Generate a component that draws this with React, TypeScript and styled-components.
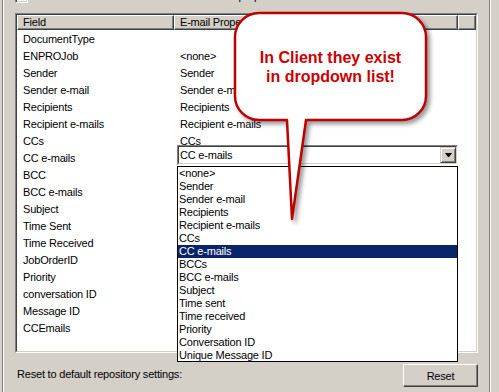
import React from 'react';
import styled, { createGlobalStyle } from 'styled-components';

const FIELDS: [string, string | null][] = [
  ['DocumentType', ''],
  ['ENPROJob', '<none>'],
  ['Sender', 'Sender'],
  ['Sender e-mail', 'Sender e-mail'],
  ['Recipients', 'Recipients'],
  ['Recipient e-mails', 'Recipient e-mails'],
  ['CCs', 'CCs'],
  ['CC e-mails', null],
  ['BCC', ''],
  ['BCC e-mails', ''],
  ['Subject', ''],
  ['Time Sent', ''],
  ['Time Received', ''],
  ['JobOrderID', ''],
  ['Priority', ''],
  ['conversation ID', ''],
  ['Message ID', ''],
  ['CCEmails', '']
];

const OPTIONS = [
  '<none>',
  'Sender',
  'Sender e-mail',
  'Recipients',
  'Recipient e-mails',
  'CCs',
  'CC e-mails',
  'BCCs',
  'BCC e-mails',
  'Subject',
  'Time sent',
  'Time received',
  'Priority',
  'Conversation ID',
  'Unique Message ID'
];

const SELECTED = 'CC e-mails';

const GlobalStyle = createGlobalStyle`
  html, body {
    margin: 0;
    padding: 0;
    background: #d4d0c8;
    overflow: hidden;
  }
  body {
    font-family: 'Liberation Sans', Arial, sans-serif;
    font-size: 11px;
    letter-spacing: -0.2px;
    color: #000;
  }
`;

const Root = styled.div`
  position: relative;
  width: 499px;
  height: 392px;
  overflow: hidden;
  background: #d4d0c8;
  display: flex;
`;

const Frame = styled.div`
  margin-left: 2px;
  width: 489px;
  height: 100%;
  box-sizing: border-box;
  border-left: 1px solid #808080;
  border-right: 1px solid #fff;
  box-shadow: inset 1px 0 #fff, inset -1px 0 #808080;
  padding-left: 12px;
  display: flex;
  flex-direction: column;
`;

const CheckRow = styled.div`
  margin-top: -10px;
  height: 13px;
  display: flex;
  align-items: flex-end;
  white-space: nowrap;
`;

const CheckBox = styled.div`
  width: 13px;
  height: 13px;
  box-sizing: border-box;
  background: #fff;
  border: 1px solid;
  border-color: #808080 #fff #fff #808080;
  box-shadow: inset 1px 1px #404040, inset -1px -1px #d4d0c8;
`;

const CheckLabel = styled.span`
  margin-left: 5px;
  line-height: 13px;
`;

const List = styled.div`
  margin-top: 10px;
  width: 463px;
  height: 340px;
  box-sizing: border-box;
  border: 1px solid;
  border-color: #808080 #fff #fff #808080;
  display: flex;
`;

const ListInner = styled.div`
  position: relative;
  flex: 1;
  background: #fff;
  border: 1px solid;
  border-color: #404040 #d4d0c8 #d4d0c8 #404040;
`;

const Header = styled.div`
  display: flex;
  height: 15px;
  margin-bottom: 1px;
`;

const HeaderCell = styled.div<{ $w: number }>`
  width: ${p => p.$w}px;
  box-sizing: border-box;
  background: #d4d0c8;
  border: 1px solid;
  border-color: #fff #404040 #404040 #fff;
  box-shadow: inset -1px -1px #808080;
  padding-left: 5px;
  line-height: 13px;
  white-space: nowrap;
  overflow: hidden;
`;

const Row = styled.div`
  display: flex;
  height: 17px;
  line-height: 17px;
`;

const Cell = styled.div<{ $w: number }>`
  width: ${p => p.$w}px;
  box-sizing: border-box;
  padding-left: 6px;
  white-space: nowrap;
  overflow: hidden;
`;

const Combo = styled.div`
  position: absolute;
  left: 160px;
  top: 130px;
  width: 281px;
  height: 20px;
  box-sizing: border-box;
  border: 1px solid;
  border-color: #808080 #fff #fff #808080;
  display: flex;
`;

const ComboInner = styled.div`
  flex: 1;
  display: flex;
  align-items: center;
  background: #fff;
  border: 1px solid;
  border-color: #404040 #d4d0c8 #d4d0c8 #404040;
`;

const ComboText = styled.span`
  flex: 1;
  padding-left: 1px;
  line-height: 16px;
`;

const ComboButton = styled.div`
  width: 16px;
  height: 16px;
  box-sizing: border-box;
  background: #d4d0c8;
  border: 1px solid;
  border-color: #d4d0c8 #404040 #404040 #d4d0c8;
  box-shadow: inset 1px 1px #fff, inset -1px -1px #808080;
  display: flex;
  align-items: center;
  justify-content: center;
`;

const Arrow = styled.div`
  width: 1px;
  height: 0;
  border-left: 3px solid transparent;
  border-right: 3px solid transparent;
  border-top: 4px solid #000;
`;

const Dropdown = styled.div`
  position: absolute;
  left: 160px;
  top: 151px;
  width: 281px;
  height: 196px;
  box-sizing: border-box;
  border: 1px solid #000;
  background: #fff;
  z-index: 2;
`;

const Option = styled.div<{ $selected?: boolean }>`
  height: 13px;
  line-height: 13px;
  padding-left: 1px;
  white-space: nowrap;
  background: ${p => (p.$selected ? '#0a246a' : 'transparent')};
  color: ${p => (p.$selected ? '#fff' : '#000')};
`;

const Footer = styled.div`
  margin-top: 11px;
  width: 463px;
  height: 23px;
  display: flex;
  align-items: center;
`;

const FooterLabel = styled.span`
  padding-left: 2px;
  margin-top: -3px;
`;

const Button = styled.div`
  margin-left: auto;
  width: 75px;
  height: 23px;
  box-sizing: border-box;
  background: #d4d0c8;
  border: 1px solid;
  border-color: #fff #404040 #404040 #fff;
  box-shadow: inset -1px -1px #808080;
  display: flex;
  align-items: center;
  justify-content: center;
`;

const Callout = styled.div`
  position: absolute;
  left: 228px;
  top: 8px;
  width: 215px;
  height: 222px;
  z-index: 5;
`;

const CalloutShape = styled.svg`
  display: block;
  filter: drop-shadow(3px 3px 2px rgba(0, 0, 0, 0.4));
`;

const CalloutText = styled.div`
  position: absolute;
  left: 7px;
  top: 5px;
  width: 191px;
  height: 107px;
  display: flex;
  align-items: center;
  justify-content: center;
  text-align: center;
  font-family: 'Liberation Sans', Arial, sans-serif;
  font-weight: bold;
  font-size: 16px;
  line-height: 19px;
  letter-spacing: 0;
  color: #cc0000;
`;

const COLS = [157, 284, 18];

export default function App() {
  return (
    <Root>
      <GlobalStyle />
      <Frame>
        <CheckRow>
          <CheckBox />
          <CheckLabel>Override the default field names with e-mail properties</CheckLabel>
        </CheckRow>
        <List>
          <ListInner>
            <Header>
              <HeaderCell $w={COLS[0]}>Field</HeaderCell>
              <HeaderCell $w={COLS[1]}>E-mail Property</HeaderCell>
              <HeaderCell $w={COLS[2]} />
            </Header>
            {FIELDS.map(([field, value]) => (
              <Row key={field}>
                <Cell $w={COLS[0]}>{field}</Cell>
                <Cell $w={COLS[1]}>{value}</Cell>
              </Row>
            ))}
            <Combo>
              <ComboInner>
                <ComboText>{SELECTED}</ComboText>
                <ComboButton>
                  <Arrow />
                </ComboButton>
              </ComboInner>
            </Combo>
            <Dropdown>
              {OPTIONS.map(o => (
                <Option key={o} $selected={o === SELECTED}>
                  {o}
                </Option>
              ))}
            </Dropdown>
          </ListInner>
        </List>
        <Footer>
          <FooterLabel>Reset to default repository settings:</FooterLabel>
          <Button>Reset</Button>
        </Footer>
      </Frame>
      <Callout>
        <CalloutShape width="215" height="222" viewBox="0 0 215 222">
          <path
            d="M31 5 H174 A24 24 0 0 1 198 29 V88 A24 24 0 0 1 174 112 H78 L64 211 L59 112 H31 A24 24 0 0 1 7 88 V29 A24 24 0 0 1 31 5 Z"
            fill="#fff"
            stroke="#c00000"
            strokeWidth="2.5"
            strokeLinejoin="round"
          />
        </CalloutShape>
        <CalloutText>
          In Client they exist
          <br />
          in dropdown list!
        </CalloutText>
      </Callout>
    </Root>
  );
}
